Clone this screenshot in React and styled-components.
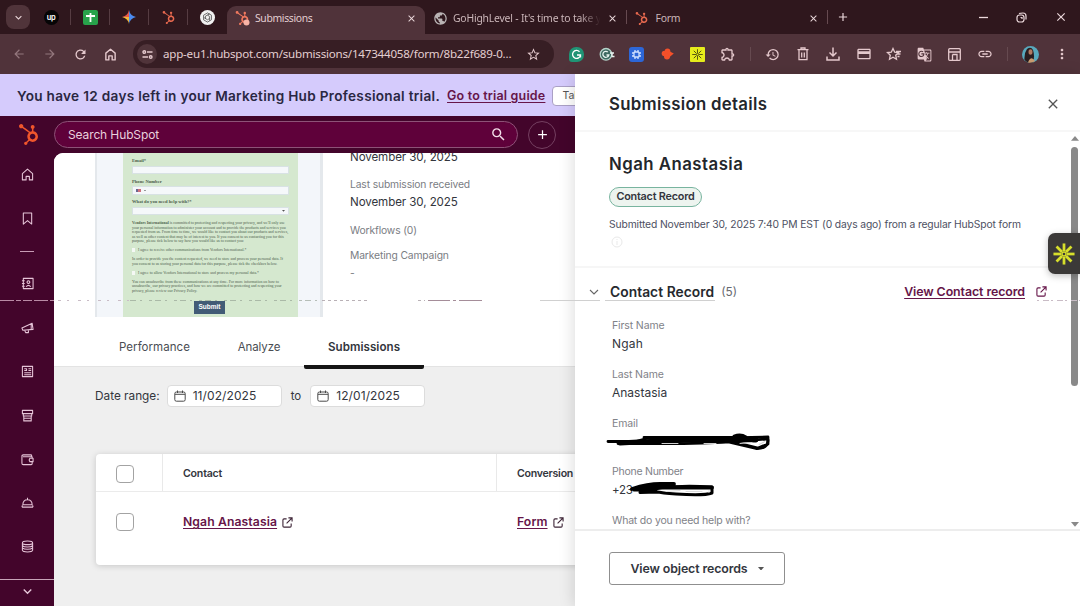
import React from 'react';
import styled, { createGlobalStyle } from 'styled-components';
import { FaHubspot } from 'react-icons/fa';
import {
  MdArrowBack, MdArrowForward, MdRefresh, MdStarBorder, MdOutlineExtension,
  MdHistory, MdDeleteOutline, MdOutlineCreditCard, MdGTranslate, MdLink,
  MdMoreVert, MdClose, MdAdd, MdExpandMore, MdPublic, MdSearch,
} from 'react-icons/md';

const Global = createGlobalStyle`
  * { box-sizing: border-box; }
  body { margin: 0; overflow: hidden; font-family: Inter, "Open Sans", sans-serif; }
  svg { display: block; flex: none; }
`;

const T = styled.span`
  font-size: ${(p) => p.$s || 12}px;
  font-weight: ${(p) => p.$w || 400};
  letter-spacing: ${(p) => p.$l || 0}px;
  color: ${(p) => p.$c || '#33363d'};
  line-height: ${(p) => p.$h || 16}px;
  white-space: nowrap;
`;

const Window = styled.div`
  width: 1080px;
  height: 606px;
  display: flex;
  flex-direction: column;
  overflow: hidden;
  background: #fff;
  position: relative;
`;

/* Browser chrome */
const TabStrip = styled.div`
  height: 34px;
  flex: none;
  background: #2f171d;
  display: flex;
  align-items: center;
  padding-left: 6px;
  color: #ecd9dc;
`;
const TabSearch = styled.div`
  width: 24px;
  height: 24px;
  border-radius: 8px;
  background: #50343a;
  display: grid;
  place-items: center;
  margin-right: 2px;
`;
const Pinned = styled.div`
  width: 39px;
  height: 16px;
  display: grid;
  place-items: center;
  border-right: 1px solid ${(p) => (p.$last ? 'transparent' : '#563c42')};
`;
const Tab = styled.div`
  width: ${(p) => p.$width}px;
  height: 28px;
  align-self: flex-end;
  display: flex;
  align-items: center;
  padding: 0 8px 4px 8px;
  gap: 5px;
  border-radius: 9px 9px 0 0;
  background: ${(p) => (p.$active ? '#50333a' : 'transparent')};
  & > span { flex: 1; overflow: hidden; font-family: "Noto Sans", sans-serif; }
`;
const Fade = styled(T)`
  mask-image: linear-gradient(90deg, #000 85%, transparent 99%);
`;
const Sep = styled.div`
  width: 1px;
  height: 14px;
  background: #664a50;
`;
const WinButtons = styled.div`
  margin-left: auto;
  display: flex;
  & > div { width: 38.7px; display: grid; place-items: center; height: 34px; }
`;
const Toolbar = styled.div`
  height: 40px;
  flex: none;
  background: #50333a;
  display: flex;
  align-items: center;
  color: #e5c9cd;
  padding-left: 4px;
`;
const Slot = styled.div`
  width: ${(p) => p.$w || 30.4}px;
  display: grid;
  place-items: center;
  opacity: ${(p) => (p.$dim ? 0.45 : 1)};
`;
const UrlBar = styled.div`
  width: 421px;
  height: 28px;
  margin: 0 7px 0 7px;
  border-radius: 14px;
  background: #371e24;
  display: flex;
  align-items: center;
  padding: 0 13px 0 4px;
  & > span { margin-left: 6px; flex: 1; font-family: "Noto Sans", sans-serif; }
`;
const TuneDot = styled.div`
  width: 20px;
  height: 20px;
  border-radius: 50%;
  background: #50343a;
  display: grid;
  place-items: center;
`;
const Ext = styled.div`
  width: 15px;
  height: 15px;
  border-radius: ${(p) => p.$r || '3px'};
  background: ${(p) => p.$bg};
  display: grid;
  place-items: center;
`;

/* Page */
const Page = styled.div`
  flex: 1;
  display: flex;
  min-height: 0;
`;
const AppPane = styled.div`
  width: 575px;
  display: flex;
  flex-direction: column;
  overflow: hidden;
  background: #43052b;
`;
const Banner = styled.div`
  height: 42px;
  flex: none;
  background: #d5cbfc;
  display: flex;
  align-items: center;
  padding: 1px 0 0 17px;
`;
const BannerButton = styled.div`
  margin-left: 7px;
  flex: none;
  width: 90px;
  height: 20px;
  border: 1px solid #aaa0c5;
  border-radius: 4px;
  background: #fff;
  display: flex;
  align-items: center;
  padding-left: 9px;
`;
const Link = styled(T)`
  color: #661549;
  text-decoration: underline;
  text-underline-offset: 2px;
  text-decoration-thickness: 1px;
`;
const BannerLink = styled(Link)`
  margin-left: 7px;
`;
const NavBar = styled.div`
  height: 37px;
  flex: none;
  display: flex;
  align-items: center;
  padding-left: 18px;
`;
const Search = styled.div`
  width: 464px;
  height: 27px;
  margin: 0 10px 0 15px;
  border: 1px solid #8d5277;
  border-radius: 14px;
  background: #5f013a;
  display: flex;
  align-items: center;
  justify-content: space-between;
  padding: 0 10px 0 13px;
`;
const PlusCircle = styled.div`
  width: 28px;
  height: 28px;
  border: 1px solid #754061;
  border-radius: 50%;
  display: grid;
  place-items: center;
`;
const Body = styled.div`
  flex: 1;
  display: flex;
  min-height: 0;
`;
const SideBar = styled.div`
  width: 54px;
  flex: none;
  display: flex;
  flex-direction: column;
  color: #e6c5d8;
`;
const SideItem = styled.div`
  height: ${(p) => p.$h || 43.8}px;
  flex: none;
  display: grid;
  place-items: center;
`;
const SideRule = styled.div`
  width: 14px;
  height: 1px;
  background: #c79cb5;
`;
const SideFooter = styled.div`
  margin-top: auto;
  height: 27px;
  border-top: 1px solid #c7a5b8;
  display: grid;
  place-items: center;
  padding-bottom: 3px;
`;
const Content = styled.div`
  flex: 1;
  min-width: 0;
  background: #efefef;
  border-top-left-radius: 9px;
  overflow: hidden;
`;
const Overview = styled.div`
  height: 165px;
  background: #fff;
  display: flex;
  padding-left: 41px;
`;
const Preview = styled.div`
  width: 228px;
  height: 164px;
  overflow: hidden;
  background: #f3f6fa;
  border: solid #e4e8ec;
  border-width: 0 3px 0 2px;
  padding: 0 22px 0 26px;
`;
const FormSheet = styled.div`
  height: 164px;
  background: #d5e8cf;
  padding: 6px 9px 0;
  display: flex;
  flex-direction: column;
  font: 3.9px/4.5px "Liberation Serif", serif;
  color: #4d5e4d;
`;
const FormLabel = styled.div`
  font-weight: 700;
  height: 6.5px;
  font-size: 4.6px;
`;
const FormInput = styled.div`
  height: 8.5px;
  margin-bottom: 5.7px;
  background: #f5f8fa;
  border: 0.5px solid #d8e2e4;
  display: flex;
  align-items: center;
  justify-content: ${(p) => (p.$end ? 'flex-end' : 'flex-start')};
  padding: 0 3px;
  gap: 3px;
`;
const Flag = styled.div`
  width: 5px;
  height: 3px;
  background: linear-gradient(90deg, #6b6790 40%, #d0707c 40%);
`;
const FormPara = styled.div`
  height: ${(p) => p.$h}px;
  flex: none;
`;
const FormCheck = styled.div`
  height: ${(p) => p.$h}px;
  flex: none;
  display: flex;
  gap: 3px;
  &::before { content: ''; width: 3px; height: 4px; background: #f5f8f5; }
`;
const FormSubmit = styled.div`
  width: 31px;
  height: 13px;
  flex: none;
  margin: 7.5px 0 0 62px;
  background: #425b76;
  color: #fff;
  font: 700 6.5px/12px "Liberation Sans", sans-serif;
  text-align: center;
`;
const Facts = styled.div`
  padding-left: 27px;
  margin-top: -4px;
  display: flex;
  flex-direction: column;
`;
const FactLabel = styled(T)`
  font-size: 10.3px;
  letter-spacing: -0.13px;
  color: #7a7d83;
  margin-top: ${(p) => p.$top}px;
`;
const FactValue = styled(T)`
  font-size: 11.6px;
  letter-spacing: -0.1px;
  margin-top: ${(p) => p.$top}px;
`;
const Tabs = styled.div`
  height: 49px;
  background: #fff;
  display: flex;
  padding-left: 41px;
  border-bottom: 1px solid #e3e3e3;
`;
const PageTab = styled.div`
  width: ${(p) => p.$width}px;
  height: 51px;
  padding-top: 19px;
  text-align: center;
  line-height: 16px;
  position: relative;
  border-bottom: 4px solid ${(p) => (p.$active ? '#151515' : 'transparent')};
  border-radius: 2px;
`;
const DateRow = styled.div`
  height: 58px;
  display: flex;
  align-items: center;
  padding-left: 41px;
`;
const DateInput = styled.div`
  width: 115px;
  height: 22px;
  margin: ${(p) => p.$m};
  background: #fff;
  border: 1px solid #dcdcdc;
  border-radius: 4px;
  display: flex;
  align-items: center;
  gap: 7px;
  padding-left: 6px;
`;
const Card = styled.div`
  margin: 29px 0 0 42px;
  width: 700px;
  height: 111px;
  border-radius: 4px;
  background: #fff;
  box-shadow: 0 1px 6px rgba(0, 0, 0, 0.17);
`;
const Row = styled.div`
  display: grid;
  grid-template-columns: 67px 334px 1fr;
  height: ${(p) => (p.$head ? 38 : 57)}px;
  border-bottom: ${(p) => (p.$head ? '1px solid #ebebeb' : '0')};
`;
const Cell = styled.div`
  display: flex;
  align-items: center;
  gap: 5px;
  padding-left: 20px;
  padding-top: 3px;
  border-right: 1px solid ${(p) => (p.$line ? '#e9e9e9' : 'transparent')};
`;
const Check = styled.div`
  width: 18px;
  height: 18px;
  border: 1px solid #a3a3a3;
  border-radius: 4px;
  background: #fff;
`;

/* Drawer */
const Drawer = styled.div`
  flex: 1;
  display: flex;
  flex-direction: column;
  background: #fff;
  position: relative;
  box-shadow: -2px 0 14px rgba(0, 0, 0, 0.13);
`;
const DrawerHead = styled.div`
  height: 58px;
  flex: none;
  border-bottom: 2px solid #f7f7f7;
  display: flex;
  align-items: center;
  justify-content: space-between;
  padding: 3px 19px 0 34px;
`;
const DrawerScroll = styled.div`
  height: 399px;
  flex: none;
  display: flex;
  overflow: hidden;
  border-bottom: 2px solid #ededed;
`;
const DrawerMain = styled.div`
  flex: 1;
`;
const Summary = styled.div`
  height: 136px;
  border-bottom: 2px solid #f6f6f6;
  padding: 20px 0 0 34px;
  display: flex;
  flex-direction: column;
  align-items: flex-start;
`;
const Badge = styled.div`
  width: 93px;
  height: 20px;
  margin: 11px 0 7px;
  border: 1px solid #78b49f;
  border-radius: 10px;
  background: #edf4ef;
  display: flex;
  align-items: center;
  justify-content: center;
`;
const SectionHead = styled.div`
  height: 46px;
  display: flex;
  align-items: center;
  gap: 7px;
  padding: 1px 24px 0 14px;
`;
const SectionTitle = styled(T)`
  margin-left: 4px;
`;
const ViewLink = styled.div`
  margin-left: auto;
  display: flex;
  align-items: center;
  gap: 11px;
`;
const Fields = styled.div`
  padding: 4px 0 0 37px;
`;
const FieldBox = styled.div`
  height: 48.8px;
  display: flex;
  flex-direction: column;
  gap: 2px;
`;
const Redacted = styled.div`
  position: relative;
  height: 16px;
  line-height: 12px;
  & > svg { position: absolute; left: -6px; top: -8px; }
`;
const ScrollBar = styled.div`
  width: 9px;
  display: flex;
  flex-direction: column;
  align-items: center;
  padding: 4px 2px 2px 0;
`;
const Thumb = styled.div`
  width: 7px;
  height: 239px;
  margin: 6px 0 auto;
  border-radius: 4px;
  background: #898989;
`;
const DrawerFoot = styled.div`
  padding: 21px 0 0 34px;
`;
const Button = styled.div`
  width: 176px;
  height: 33px;
  border: 1px solid #8f8f8f;
  border-radius: 3px;
  display: flex;
  align-items: center;
  justify-content: center;
  gap: 10px;
`;
const Widget = styled.div`
  position: absolute;
  right: 0;
  top: 233px;
  width: 32px;
  height: 41px;
  border-radius: 7px 0 0 7px;
  background: #3b3938;
  display: grid;
  place-items: center;
  box-shadow: 0 2px 7px rgba(0, 0, 0, 0.25);
`;
const ScanLine = styled.svg`
  position: absolute;
  left: 0;
  top: 299px;
  pointer-events: none;
`;

const Burst = ({ size, color, w = 3 }) => (
  <svg width={size} height={size} viewBox="0 0 24 24" stroke={color} strokeWidth={w} fill="none">
    {[0, 45, 90, 135, 180, 225, 270, 315].map((a) => (
      <path key={a} d="M12 9V0.5" transform={`rotate(${a} 12 12)`} />
    ))}
    <circle cx="12" cy="12" r="2.2" strokeWidth="1.5" />
  </svg>
);
const External = ({ size = 11, color = '#3d2436' }) => (
  <svg width={size} height={size} viewBox="0 0 12 12" fill="none" stroke={color} strokeWidth="1.2">
    <path d="M5 2H2.200Q1 2 1 3.200V9.800Q1 11 2.200 11H8.800Q10 11 10 9.800V7M7 1H11V5M11 1L5 7" />
  </svg>
);
const Calendar = () => (
  <svg width="12" height="12" viewBox="0 0 12 12" fill="none" stroke="#4a4a4a" strokeWidth="1">
    <rect x="0.8" y="2" width="10.4" height="9.2" rx="1.6" />
    <path d="M3.5 0.5V3M8.5 0.5V3M1 4.3H11" />
  </svg>
);
const Caret = ({ s = 6, up, c = '#555' }) => (
  <svg width={s} height={s * 0.6} viewBox="0 0 10 6"><path fill={c} d={up ? 'M5 0L10 6H0Z' : 'M0 0H10L5 6Z'} /></svg>
);
const Line = ({ d, s = 14, w = 1.2 }) => (
  <svg width={s} height={s} viewBox="0 0 14 14" fill="none" stroke="currentColor" strokeWidth={w} strokeLinejoin="round">
    <path d={d} />
  </svg>
);

const side = [
  'M1.5 6L7 1.2L12.5 6V12.8H9V9H5.5V12.8H1.5Z',
  'M2.5 1H11.5V13L7 9.3L2.5 13Z',
  null,
  'M2.5 1.5H13V12.5H2.5ZM1 4H4M1 7H4M1 10H4M5.5 10.5Q8 7.5 10.5 10.5M8 4A1.5 1.5 0 1 1 7.99 4',
  'M1 7.5L12 2.5L13 9L2 10ZM4 10L5 12.5H8V9.7M11 3V9',
  'M1.5 1.5H12.5V12.5H1.5ZM3.5 4H6V6H3.5M8 4H11M8 6H11M3.5 8.3H11M3.5 10.5H11',
  'M1.5 1.5H12.5V5H1.5ZM2.5 5V7.5H11.5V5M3 8V12.8H11V8M3 10H11',
  'M11.5 4V3Q11.5 2 10.5 2H2.5Q1 2 1 3.5V11Q1 12.5 2.5 12.5H11Q12 12.5 12 11.5V9.5M2 4H12V5.5M9.5 5.7H13V9.3H9.5Q8 7.5 9.5 5.7Z',
  'M1 12H13M2 9.5H12Q12 4 7 4Q2 4 2 9.5ZM1.5 10L1 12M12.5 10L13 12M7 2V4',
  'M7 1Q13 1 12.5 3.5Q12 5 7 5Q2 5 1.5 3.5Q1 1 7 1ZM1.5 3.5V11Q2 13 7 13Q12 13 12.5 11V3.5M1.5 6Q3 7.5 7 7.5Q11 7.5 12.5 6M1.5 8.5Q3 10 7 10Q11 10 12.5 8.5',
];

const Avatar = () => (
  <svg width="17" height="17" viewBox="0 0 17 17">
    <circle cx="8.5" cy="8.5" r="8.5" fill="#58a9bd" />
    <path d="M2.500 14Q2 7 5 3Q9 0 11 4Q13 10 11 16.500Q6 18 2.500 14Z" fill="#2b1d1f" />
    <ellipse cx="8.500" cy="6" rx="2" ry="2.800" fill="#b27a61" />
    <path d="M6 16.500Q9 9 13 15Q10 17.500 6 16.500Z" fill="#c99b70" />
  </svg>
);

const Field = ({ label, value, l = 0, ll = -0.13 }) => (
  <FieldBox>
    <T $s={10.5} $l={ll} $c="#7f8288">{label}</T>
    {value && <T $l={l}>{value}</T>}
  </FieldBox>
);

export default function App() {
  return (
    <Window>
      <Global />
      <TabStrip>
        <TabSearch><MdExpandMore size={13} /></TabSearch>
        <Pinned>
          <Ext $bg="#060506" $r="50%"><T $s={7.5} $w={600} $c="#fff" $l={-0.3} $h={9}>up</T></Ext>
        </Pinned>
        <Pinned>
          <Ext $bg="#28a24b" $r="2px">
            <svg width="11" height="11" viewBox="0 0 11 11" stroke="#fff" strokeWidth="1.8"><path d="M1 4H10M5.5 1V10" /></svg>
          </Ext>
        </Pinned>
        <Pinned>
          <svg width="14" height="14" viewBox="0 0 14 14">
            <path d="M7 0Q8 5.500 14 7H7Z" fill="#4b8bf0" /><path d="M7 0Q6 5.500 0 7H7Z" fill="#e8594a" />
            <path d="M0 7Q6 8.500 7 14V7Z" fill="#eeb83a" /><path d="M14 7Q8 8.500 7 14V7Z" fill="#4b8bf0" />
          </svg>
        </Pinned>
        <Pinned><FaHubspot size={13} color="#e8694f" /></Pinned>
        <Pinned $last>
          <Ext $bg="#f1f1f1" $r="50%">
            <svg width="11" height="11" viewBox="0 0 12 12" fill="none" stroke="#555" strokeWidth="0.9">
              <path d="M6 1L10.300 3.500V8.500L6 11L1.700 8.500V3.500ZM3.800 7.500V4.500L8.500 2M6 3.300L8.300 5V9.500M8.300 7L6 8.500L2 6" />
            </svg>
          </Ext>
        </Pinned>
        <Tab $width={198} $active>
          <svg width="15" height="15" viewBox="0 0 15 15">
            <FaHubspot size={14} color="#f0795f" />
            <circle cx="11.500" cy="11.500" r="3" fill="#f7b3a5" />
          </svg>
          <T $s={10.4} $l={-0.35} $c="#e3cfd2">Submissions</T>
          <MdClose size={11} />
        </Tab>
        <Tab $width={201}>
          <MdPublic size={15} color="#b9b3b4" />
          <Fade $s={10.4} $l={-0.2} $c="#cbb6b9">GoHighLevel - It's time to take y</Fade>
          <MdClose size={11} />
        </Tab>
        <Sep />
        <Tab $width={200}>
          <FaHubspot size={13} color="#e8694f" />
          <T $s={10.4} $l={-0.2} $c="#cbb6b9">&nbsp;Form</T>
          <MdClose size={11} />
        </Tab>
        <Sep />
        <Slot $w={29}><MdAdd size={14} /></Slot>
        <WinButtons>
          <div><svg width="9" height="9" viewBox="0 0 9 9" stroke="currentColor"><path d="M0 4.500H9" strokeWidth="1.300" /></svg></div>
          <div>
            <svg width="11" height="11" viewBox="0 0 11 11" fill="none" stroke="currentColor" strokeWidth="1.200">
              <rect x="1" y="3" width="7" height="7" rx="2.500" /><path d="M3 1.500Q4 1 7 1Q10 1 10 4V7.500M4.500 5.500H6V7" />
            </svg>
          </div>
          <div><MdClose size={14} /></div>
        </WinButtons>
      </TabStrip>
      <Toolbar>
        <Slot $w={30.5} $dim><MdArrowBack size={14} /></Slot>
        <Slot $w={30.5} $dim><MdArrowForward size={14} /></Slot>
        <Slot $w={30.5}><MdRefresh size={15} /></Slot>
        <Slot $w={30.5}><Line s={13} w={1.5} d="M2 5.5L7 1.3L12 5.5V12.8H8.8V8.5H5.2V12.8H2Z" /></Slot>
        <UrlBar>
          <TuneDot>
            <svg width="11" height="9" viewBox="0 0 11 9" fill="none" stroke="currentColor" strokeWidth="1.4">
              <circle cx="2.3" cy="2" r="1.3" /><path d="M5 2H10.5M0.5 7H6" /><circle cx="8.7" cy="7" r="1.3" />
            </svg>
          </TuneDot>
          <T $s={11.6} $l={-0.22} $c="#e3ced1">app-eu1.hubspot.com/submissions/147344058/form/8b22f689-0...</T>
          <MdStarBorder size={15} />
        </UrlBar>
        <Slot>
          <Ext $bg="#1f9475" $r="7px 7px 7px 3px">
            <svg width="11" height="11" viewBox="0 0 11 11" fill="none" stroke="#fff" strokeWidth="1.3"><path d="M8.5 2.7A4 4 0 1 0 9.5 6H6M9.5 6V8.5" /></svg>
          </Ext>
        </Slot>
        <Slot>
          <svg width="16" height="15" viewBox="0 0 16 15" fill="none">
            <circle cx="7" cy="7.300" r="5.800" fill="#3e6a62" stroke="#b5d3ca" strokeWidth="1.300" />
            <path d="M8.800 5A3 3 0 1 0 9.800 8H7.500M11 6H15M12.500 9.500H15.500M13 6V9" stroke="#e8f4f0" strokeWidth="1.300" />
          </svg>
        </Slot>
        <Slot>
          <Ext $bg="#2d67d8">
            <svg width="11" height="11" viewBox="0 0 11 11" fill="none" stroke="#cfe0ff" strokeWidth="1.3">
              <rect x="3" y="3" width="5" height="5" rx="1" /><path d="M4 1V3M7 1V3M4 8V10M7 8V10M1 4H3M1 7H3M8 4H10M8 7H10" />
            </svg>
          </Ext>
        </Slot>
        <Slot>
          <svg width="13" height="12" viewBox="0 0 13 12" fill="#f4502a">
            <circle cx="3.5" cy="5.5" r="2.800" /><circle cx="6.500" cy="3.300" r="2.800" /><circle cx="6" cy="8.600" r="3" /><path d="M6 2L12.800 5.500L8 9.500Z" />
          </svg>
        </Slot>
        <Slot><Ext $bg="#e6ec1c" $r="1px"><Burst size={11} color="#4b4c10" w={2} /></Ext></Slot>
        <Slot><MdOutlineExtension size={16} /></Slot>
        <Slot $w={14}><Sep /></Slot>
        <Slot><MdHistory size={15} /></Slot>
        <Slot>
          <svg width="12" height="14" viewBox="0 0 12 14" fill="none" stroke="currentColor" strokeWidth="1.3">
            <path d="M0.500 2.700H11.500M4 2.500V1H8V2.500M2 3V12.700H10V3M4.700 5.500V10.500M7.300 5.500V10.500" />
          </svg>
        </Slot>
        <Slot>
          <svg width="14" height="14" viewBox="0 0 14 14" fill="none" stroke="currentColor" strokeWidth="1.5"><path d="M7 0.5V8.5M3.5 5.5L7 9L10.5 5.5M1 9.5V13H13V9.5" /></svg>
        </Slot>
        <Slot><MdOutlineCreditCard size={16} /></Slot>
        <Slot>
          <svg width="16" height="15" viewBox="0 0 16 15" fill="none" stroke="currentColor" strokeWidth="1.300">
            <path d="M7 1.500L8.700 5.200L12.500 5.600L9.700 8.200L10.500 12.200L7 10.200L3.500 12.200L4.300 8.200L1.500 5.600L5.300 5.200ZM10 4.500H15M11.500 7H14.500M11.500 9.500H13.500" />
          </svg>
        </Slot>
        <Slot><MdGTranslate size={15} /></Slot>
        <Slot>
          <svg width="13" height="13" viewBox="0 0 13 13" fill="none" stroke="currentColor" strokeWidth="1.300">
            <rect x="0.700" y="0.700" width="11.600" height="11.600" rx="1" /><path d="M1 4H12M4.500 6.500V12M4.500 6.500H9V12" />
          </svg>
        </Slot>
        <Slot><MdLink size={16} /></Slot>
        <Slot $w={14}><Sep /></Slot>
        <Slot $w={32}><Avatar /></Slot>
        <Slot><MdMoreVert size={16} /></Slot>
      </Toolbar>
      <Page>
        <AppPane>
          <Banner>
            <T $s={13.6} $w={600} $l={0.3} $c="#2a2742">You have 12 days left in your Marketing Hub Professional trial.</T>
            <BannerLink $s={12.5} $w={600} $l={0.17}>Go to trial guide</BannerLink>
            <BannerButton><T $s={10.5} $c="#555">Talk to Sales</T></BannerButton>
          </Banner>
          <NavBar>
            <FaHubspot size={21} color="#f0562c" />
            <Search>
              <T $s={12} $l={-0.12} $c="#e9d0dd">Search HubSpot</T>
              <MdSearch size={17} color="#f3dfe9" />
            </Search>
            <PlusCircle><MdAdd size={15} color="#fff" /></PlusCircle>
          </NavBar>
          <Body>
            <SideBar>
              {side.map((d, i) =>
                d ? (
                  <SideItem key={i}><Line d={d} s={13} w={1.15} /></SideItem>
                ) : (
                  <SideItem key={i} $h={21.5}><SideRule /></SideItem>
                )
              )}
              <SideFooter><MdExpandMore size={17} /></SideFooter>
            </SideBar>
            <Content>
              <Overview>
                <Preview>
                  <FormSheet>
                    <FormLabel>Email*</FormLabel>
                    <FormInput />
                    <FormLabel>Phone Number</FormLabel>
                    <FormInput><Flag /><Caret s={2} /></FormInput>
                    <FormLabel>What do you need help with?*</FormLabel>
                    <FormInput $end><Caret s={3} /></FormInput>
                    <FormPara $h={27}>
                      <b>Vendors International</b> is committed to protecting and respecting your privacy, and we'll only use your personal information to administer your account and to provide the products and services you requested from us. From time to time, we would like to contact you about our products and services, as well as other content that may be of interest to you. If you consent to us contacting you for this purpose, please tick below to say how you would like us to contact you:
                    </FormPara>
                    <FormCheck $h={9}>I agree to receive other communications from Vendors International.*</FormCheck>
                    <FormPara $h={13.5}>
                      In order to provide you the content requested, we need to store and process your personal data. If you consent to us storing your personal data for this purpose, please tick the checkbox below.
                    </FormPara>
                    <FormCheck $h={9}>I agree to allow Vendors International to store and process my personal data.*</FormCheck>
                    <FormPara $h={14}>
                      You can unsubscribe from these communications at any time. For more information on how to unsubscribe, our privacy practices, and how we are committed to protecting and respecting your privacy, please review our Privacy Policy.
                    </FormPara>
                    <FormSubmit>Submit</FormSubmit>
                  </FormSheet>
                </Preview>
                <Facts>
                  <FactValue>November 30, 2025</FactValue>
                  <FactLabel $top={11}>Last submission received</FactLabel>
                  <FactValue $top={2}>November 30, 2025</FactValue>
                  <FactLabel $top={12}>Workflows (0)</FactLabel>
                  <FactLabel $top={9}>Marketing Campaign</FactLabel>
                  <FactLabel $top={2}>-</FactLabel>
                </Facts>
              </Overview>
              <Tabs>
                <PageTab $width={119}><T $s={11.5} $l={0.05} $c="#4a4d53">Performance</T></PageTab>
                <PageTab $width={90}><T $s={11.5} $l={-0.1} $c="#4a4d53">Analyze</T></PageTab>
                <PageTab $width={120} $active><T $s={11.6} $w={600} $l={0.05}>Submissions</T></PageTab>
              </Tabs>
              <DateRow>
                <T $s={11.8}>Date range:</T>
                <DateInput $m="0 9px 0 7px"><Calendar /><T $l={0.1}>11/02/2025</T></DateInput>
                <T $s={11.5}>to</T>
                <DateInput $m="0 0 0 9px"><Calendar /><T $l={0.1}>12/01/2025</T></DateInput>
              </DateRow>
              <Card>
                <Row $head>
                  <Cell $line><Check /></Cell>
                  <Cell $line><T $s={10.6} $w={600} $l={-0.2}>Contact</T></Cell>
                  <Cell><T $s={10.6} $w={600} $l={-0.25}>Conversion</T></Cell>
                </Row>
                <Row>
                  <Cell><Check /></Cell>
                  <Cell><Link $s={12.2} $w={600} $l={0.1}>Ngah Anastasia</Link><External /></Cell>
                  <Cell><Link $s={12.2} $w={600} $l={0.1}>Form</Link><External /></Cell>
                </Row>
              </Card>
            </Content>
          </Body>
        </AppPane>
        <Drawer>
          <DrawerHead>
            <T $s={16.8} $w={600} $l={0.3} $c="#23262b" $h={22}>Submission details</T>
            <MdClose size={16} color="#555" />
          </DrawerHead>
          <DrawerScroll>
            <DrawerMain>
              <Summary>
                <T $s={16.8} $w={600} $l={0.48} $c="#23262b" $h={24}>Ngah Anastasia</T>
                <Badge><T $s={10.8} $w={600} $l={-0.2}>Contact Record</T></Badge>
                <T $s={10.3} $l={-0.12} $c="#4d5062" $h={20}>Submitted November 30, 2025 7:40 PM EST (0 days ago) from a regular HubSpot form</T>
                <svg width="16" height="16" viewBox="0 0 16 16" fill="none" stroke="#e9e9e9"><circle cx="8" cy="8" r="5" /><path d="M8 5V6M8 7V11" /></svg>
              </Summary>
              <SectionHead>
                <svg width="10" height="6" viewBox="0 0 10 6" fill="none" stroke="#666" strokeWidth="1.1"><path d="M1 1L5 5L9 1" /></svg>
                <SectionTitle $s={13.8} $w={600} $l={0.05} $c="#26292e">Contact Record</SectionTitle>
                <T $s={11.8} $c="#66696f">(5)</T>
                <ViewLink>
                  <Link $s={12.4} $w={600} $l={-0.09}>View Contact record</Link>
                  <External size={11} color="#661549" />
                </ViewLink>
              </SectionHead>
              <Fields>
                <Field label="First Name" value="Ngah" l={0.19} />
                <Field label="Last Name" value="Anastasia" />
                <FieldBox>
                  <T $s={10.5} $l={-0.1} $c="#7f8288">Email</T>
                  <Redacted>
                    <svg width="168" height="28" viewBox="0 0 168 28" fill="none" stroke="#000" strokeLinecap="round" strokeLinejoin="round">
                      <path d="M2 15.500H30L42 12H120L162 11V18L152 22L124 15" strokeWidth="2.800" />
                      <path d="M14 17Q50 15 90 14T150 14" strokeWidth="5" />
                      <path d="M12 17.500H70Q110 18 160 13M38 11.500H140M128 10Q135 7.500 140 11M118 15L150 22.500Q162 23 162 14" strokeWidth="2.800" />
                      <path d="M56 17.500H72M98 17.500H110M134 17.500L146 16.500M153 18.500L159 15.500" stroke="#cfcfcf" strokeWidth="1" />
                    </svg>
                  </Redacted>
                </FieldBox>
                <FieldBox>
                  <T $s={10.5} $l={-0.25} $c="#7f8288">Phone Number</T>
                  <Redacted>
                    <T $s={11.5} $l={-0.3}>+23</T>
                    <svg width="112" height="28" viewBox="0 0 112 28" fill="none" stroke="#000" strokeLinecap="round" strokeLinejoin="round">
                      <path d="M26 15Q42 10 54 10H68M26 15Q40 12 60 13.500H106" strokeWidth="3.800" />
                      <path d="M28 16H50M34 18.500Q60 10 106 13V19Q98 22 70 20T46 15M34 18.500L52 18" strokeWidth="3" />
                      <path d="M60 17.500L74 16.500M80 17.500H96M103 16.500V18.500" stroke="#dcdcdc" strokeWidth="1" />
                    </svg>
                  </Redacted>
                </FieldBox>
                <Field label="What do you need help with?" ll={-0.2} />
              </Fields>
            </DrawerMain>
            <ScrollBar>
              <Caret s={8} up c="#898989" />
              <Thumb />
              <Caret s={8} c="#898989" />
            </ScrollBar>
          </DrawerScroll>
          <DrawerFoot>
            <Button><T $s={12.4} $w={600} $l={-0.12}>View object records</T><Caret /></Button>
          </DrawerFoot>
        </Drawer>
      </Page>
      <Widget><Burst size={22} color="#d7df2b" /></Widget>
      <ScanLine width="1080" height="3" viewBox="0 0 1080 3" fill="none">
        <path d="M0 1.500H54" stroke="#b98ba5" strokeDasharray="14 2 5 2 9 2" />
        <path d="M58 1.500H130" stroke="#c9bcc6" strokeDasharray="3 6 2 9" />
        <path d="M130 1.500H322" stroke="#8e9a8c" strokeDasharray="6 4 2 7 3 3" opacity="0.600" />
        <path d="M322 1.500H368M418 1.500H425" stroke="#b9b1b6" strokeDasharray="3 3" />
        <path d="M428 1.500H450M453 1.500H456M459 1.500H482" stroke="#a58d99" />
        <path d="M540 1.500H600M605 1.500H715" stroke="#d0d0d0" />
        <path d="M1037 1.500H1080" stroke="#c9bcc6" strokeDasharray="2 4 6 2" />
      </ScanLine>
    </Window>
  );
}
